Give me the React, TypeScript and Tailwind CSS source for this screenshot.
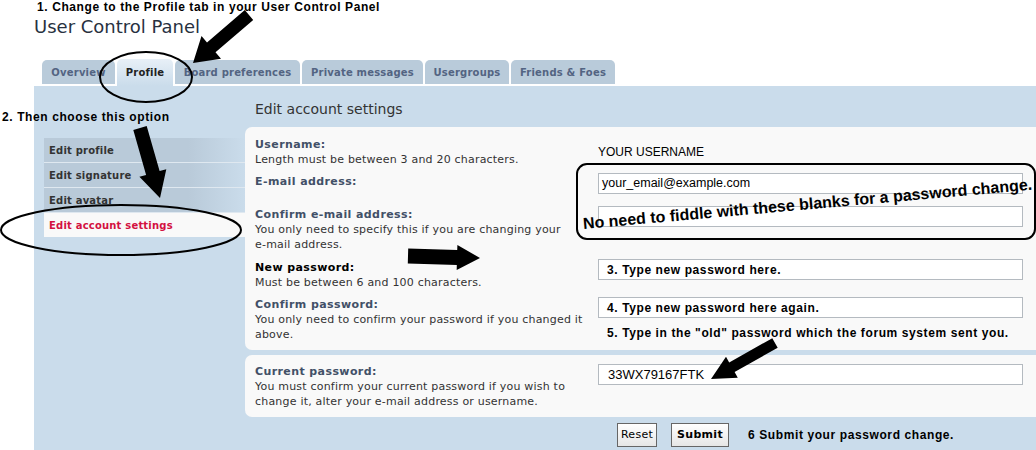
import React from "react";

const ann = "font-['Liberation_Sans',Arial,sans-serif] font-bold text-[12px] tracking-[0.6px] text-black";
const vera = "font-['DejaVu_Sans',Verdana,sans-serif]";
const lbl = `${vera} text-[11px] leading-[15px] font-bold tracking-[0.4px] text-[#425067]`;
const desc = `${vera} text-[11px] leading-[15px] tracking-[0.2px] text-[#333333]`;
const box = "h-[21px] border border-[#b4bac0] bg-white flex items-center";

type Pt = [number, number];

function arrowPoints(tail: Pt, tip: Pt, bw: number, hw: number, hl: number) {
  const [x1, y1] = tail;
  const [x2, y2] = tip;
  const len = Math.hypot(x2 - x1, y2 - y1);
  const ux = (x2 - x1) / len;
  const uy = (y2 - y1) / len;
  const nx = -uy;
  const ny = ux;
  const bx = x2 - ux * hl;
  const by = y2 - uy * hl;
  const pts: Pt[] = [
    [x1 + (nx * bw) / 2, y1 + (ny * bw) / 2],
    [bx + (nx * bw) / 2, by + (ny * bw) / 2],
    [bx + (nx * hw) / 2, by + (ny * hw) / 2],
    [x2, y2],
    [bx - (nx * hw) / 2, by - (ny * hw) / 2],
    [bx - (nx * bw) / 2, by - (ny * bw) / 2],
    [x1 - (nx * bw) / 2, y1 - (ny * bw) / 2],
  ];
  return pts.map(([x, y]) => `${x.toFixed(1)},${y.toFixed(1)}`).join(" ");
}

const tabs = [
  { name: "Overview", w: "w-[73px]" },
  { name: "Profile", w: "w-[56px]", active: true },
  { name: "Board preferences", w: "w-[125px]" },
  { name: "Private messages", w: "w-[121px]" },
  { name: "Usergroups", w: "w-[84px]" },
  { name: "Friends & Foes", w: "w-[104px]" },
];

const menu = ["Edit profile", "Edit signature", "Edit avatar"];

const App: React.FC = () => {
  return (
    <div className="relative w-[1036px] h-[450px] overflow-hidden bg-white">
      <div className={`${ann} h-[14px] leading-[12px] pl-[37px] pt-[1px]`}>
        1. Change to the Profile tab in your User Control Panel
      </div>
      <h1 className={`${vera} text-[18px] leading-[22px] text-[#28313f] pl-[34px] mt-[2px]`}>
        User Control Panel
      </h1>

      {/* tabs */}
      <div className="flex items-start gap-[2px] pl-[42px] mt-[22px] h-[26px]">
        {tabs.map((t) =>
          t.active ? (
            <div
              key={t.name}
              className={`${t.w} -mt-px h-[27px] pt-[6px] text-center rounded-t-[5px] bg-gradient-to-b from-[#e8f0f7] to-[#cadceb] ${vera} text-[10px] leading-[15px] font-bold tracking-[0.2px] text-[#222]`}>
              {t.name}
            </div>
          ) : (
            <div
              key={t.name}
              className={`${t.w} h-[24px] pt-[5px] text-center rounded-t-[5px] bg-[#b9cbda] ${vera} text-[10px] leading-[15px] font-bold tracking-[0.2px] text-[#536482]`}>
              {t.name}
            </div>
          )
        )}
      </div>

      {/* main panel */}
      <div className="ml-[34px] h-[364px] bg-[#cadceb] flex">
        <div className="w-[211px] pl-[10px] pt-[52px] shrink-0">
          {menu.map((m) => (
            <div
              key={m}
              className={`h-[25px] pl-[5px] flex items-center border-b border-[#dfe8f0] bg-[linear-gradient(to_right,#b9cad9_72%,#cadceb)] ${vera} text-[10px] font-bold tracking-[0.2px] text-[#333]`}>
              {m}
            </div>
          ))}
          <div className={`h-[24px] pl-[5px] flex items-center bg-[#f9f9f9] ${vera} text-[10px] font-bold tracking-[0.2px] text-[#d31141]`}>
            Edit account settings
          </div>
        </div>

        <div className="flex-1">
          <h2 className={`${vera} text-[14px] leading-[18px] text-[#333] pl-[10px] pt-[14px] h-[41px]`}>
            Edit account settings
          </h2>

          <div className="h-[223px] rounded-l-[7px] bg-[#f9f9f9] pl-[10px] pt-[10px]">
            <div className="flex h-[37px]">
              <div className="w-[343px]">
                <div className={lbl}>Username:</div>
                <div className={desc}>Length must be between 3 and 20 characters.</div>
              </div>
              <div className="pt-[8px] font-['Liberation_Sans',Arial,sans-serif] text-[12px] leading-[15px] text-black">
                YOUR USERNAME
              </div>
            </div>
            <div className="flex h-[33px]">
              <div className="w-[343px]">
                <div className={lbl}>E-mail address:</div>
              </div>
              <div className={`${box} w-[425px] -mt-px pl-[3px] font-['Liberation_Sans',Arial,sans-serif] text-[12.5px] text-black`}>
                your_email@example.com
              </div>
            </div>
            <div className="flex h-[53px]">
              <div className="w-[343px]">
                <div className={lbl}>Confirm e-mail address:</div>
                <div className={desc}>
                  You only need to specify this if you are changing your
                  <br />
                  e-mail address.
                </div>
              </div>
              <div className={`${box} w-[425px] -mt-px`} />
            </div>
            <div className="flex h-[37px]">
              <div className="w-[343px]">
                <div className={`${lbl} !text-black`}>New password:</div>
                <div className={desc}>Must be between 6 and 100 characters.</div>
              </div>
              <div className={`${box} w-[425px] -mt-px pl-[8px] ${ann} leading-[12px]`}>
                3. Type new password here.
              </div>
            </div>
            <div className="flex">
              <div className="w-[343px]">
                <div className={lbl}>Confirm password:</div>
                <div className={desc}>
                  You only need to confirm your password if you changed it
                  <br />
                  above.
                </div>
              </div>
              <div className={`${box} w-[425px] pl-[8px] ${ann} leading-[12px]`}>
                4. Type new password here again.
              </div>
            </div>
          </div>

          <div className="mt-[5px] h-[62px] rounded-l-[7px] bg-[#f9f9f9] pl-[10px] pt-[9px]">
            <div className="flex">
              <div className="w-[343px]">
                <div className={lbl}>Current password:</div>
                <div className={desc}>
                  You must confirm your current password if you wish to
                  <br />
                  change it, alter your e-mail address or username.
                </div>
              </div>
              <div className={`${box} w-[425px] pl-[9px] font-['Liberation_Sans',Arial,sans-serif] text-[13px] text-black`}>
                33WX79167FTK
              </div>
            </div>
          </div>

          <div className="mt-[6px] h-[24px] flex items-center pl-[372px]">
            <button className={`h-[24px] w-[40px] border border-[#666] bg-gradient-to-b from-white to-[#e6e6e6] ${vera} text-[11px] tracking-[0.3px] text-black`}>
              Reset
            </button>
            <button className={`ml-[14px] h-[24px] w-[58px] border border-[#666] bg-gradient-to-b from-white to-[#e6e6e6] ${vera} text-[11px] font-bold tracking-[0.3px] text-black`}>
              Submit
            </button>
            <span className={`${ann} leading-[12px] ml-[19px]`}>6 Submit your password change.</span>
          </div>
        </div>
      </div>

      {/* annotations */}
      <svg className="absolute left-0 top-0 pointer-events-none" width="1036" height="450" viewBox="0 0 1036 450">
        <ellipse cx="146" cy="77" rx="46" ry="25" fill="none" stroke="black" strokeWidth="2" />
        <ellipse cx="121" cy="230" rx="120" ry="25" fill="none" stroke="black" strokeWidth="2" />
        <rect x="577" y="164" width="458" height="75" rx="10" fill="none" stroke="black" strokeWidth="2" />
        <polygon points={arrowPoints([249, 15], [193, 63], 13, 30, 24)} fill="black" />
        <polygon points={arrowPoints([140, 128], [160, 198], 14, 28, 26)} fill="black" />
        <polygon points={arrowPoints([408, 256], [480, 258], 15, 25, 23)} fill="black" />
        <polygon points={arrowPoints([775, 343], [711, 379], 11, 24, 24)} fill="black" />
      </svg>
      <div className={`absolute left-[2px] top-[111px] ${ann} leading-[12px]`}>2. Then choose this option</div>
      <div className={`absolute left-[607px] top-[327px] ${ann} leading-[12px]`}>
        5. Type in the "old" password which the forum system sent you.
      </div>
      <div className="absolute left-[583px] top-[215px] origin-left [transform:rotate(-5deg)] whitespace-nowrap font-['Liberation_Sans',Arial,sans-serif] font-bold text-[16px] leading-[18px] text-black">
        No need to fiddle with these blanks for a password change.
      </div>
    </div>
  );
};

export default App;
